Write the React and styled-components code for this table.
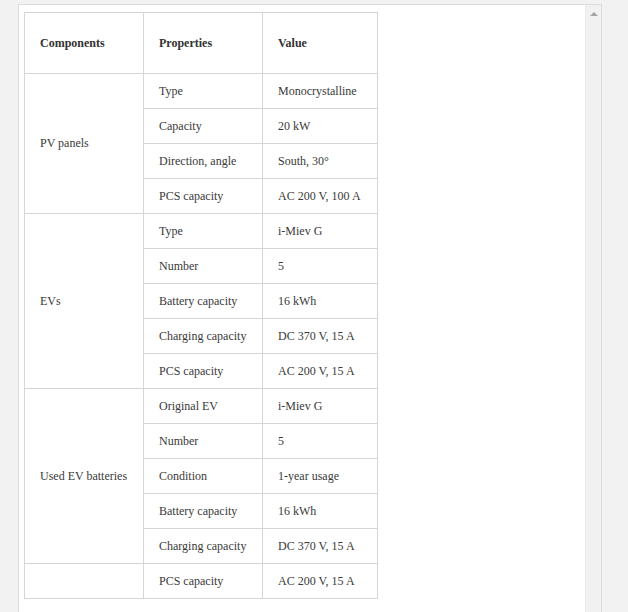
import styled, { createGlobalStyle } from "styled-components";

const GlobalStyle = createGlobalStyle`
  html, body {
    margin: 0;
    padding: 0;
    background-color: #f2f2f2;
    overflow: hidden;
  }
`;

const Page = styled.div`
  height: 612px;
  padding: 4px 0 0 18px;
  box-sizing: border-box;
`;

const Panel = styled.div`
  width: 584px;
  height: 620px;
  display: flex;
  background-color: #ffffff;
  border: 1px solid #dcdcdc;
  border-bottom: none;
  box-sizing: border-box;
`;

const Content = styled.div`
  flex: 1;
  padding: 7px 5px;
`;

const ScrollTrack = styled.div`
  width: 16px;
  background-color: #f1f1f1;
  border-left: 1px solid #ececec;
  display: flex;
  justify-content: center;
  padding-top: 7px;
  box-sizing: border-box;
`;

const Arrow = styled.div`
  width: 0;
  height: 0;
  border-left: 4px solid transparent;
  border-right: 4px solid transparent;
  border-bottom: 4px solid #a3a3a3;
`;

const Table = styled.table`
  border-collapse: collapse;
  table-layout: fixed;
  width: 353px;
  font-family: "Liberation Serif", "Times New Roman", serif;
  font-size: 12px;
  color: #3a3a3a;
`;

const Cell = styled.td`
  border: 1px solid #d6d6d6;
  padding: 0 15px;
  height: 34px;
  text-align: left;
  white-space: nowrap;
`;

const Head = styled.th`
  border: 1px solid #d6d6d6;
  padding: 0 15px;
  height: 60px;
  text-align: left;
  font-weight: bold;
  color: #333333;
`;

const groups = [
  {
    name: "PV panels",
    rows: [
      ["Type", "Monocrystalline"],
      ["Capacity", "20 kW"],
      ["Direction, angle", "South, 30°"],
      ["PCS capacity", "AC 200 V, 100 A"],
    ],
  },
  {
    name: "EVs",
    rows: [
      ["Type", "i-Miev G"],
      ["Number", "5"],
      ["Battery capacity", "16 kWh"],
      ["Charging capacity", "DC 370 V, 15 A"],
      ["PCS capacity", "AC 200 V, 15 A"],
    ],
  },
  {
    name: "Used EV batteries",
    rows: [
      ["Original EV", "i-Miev G"],
      ["Number", "5"],
      ["Condition", "1-year usage"],
      ["Battery capacity", "16 kWh"],
      ["Charging capacity", "DC 370 V, 15 A"],
    ],
  },
  {
    name: "",
    rows: [["PCS capacity", "AC 200 V, 15 A"]],
  },
];

export default function App() {
  return (
    <Page>
      <GlobalStyle />
      <Panel>
        <Content>
          <Table>
            <colgroup>
              <col style={{ width: "119px" }} />
              <col style={{ width: "119px" }} />
              <col style={{ width: "115px" }} />
            </colgroup>
            <thead>
              <tr>
                <Head>Components</Head>
                <Head>Properties</Head>
                <Head>Value</Head>
              </tr>
            </thead>
            <tbody>
              {groups.map((group, gi) =>
                group.rows.map((row, ri) => (
                  <tr key={gi + "-" + ri}>
                    {ri === 0 && (
                      <Cell rowSpan={group.rows.length}>{group.name}</Cell>
                    )}
                    <Cell>{row[0]}</Cell>
                    <Cell>{row[1]}</Cell>
                  </tr>
                ))
              )}
            </tbody>
          </Table>
        </Content>
        <ScrollTrack>
          <Arrow />
        </ScrollTrack>
      </Panel>
    </Page>
  );
}
